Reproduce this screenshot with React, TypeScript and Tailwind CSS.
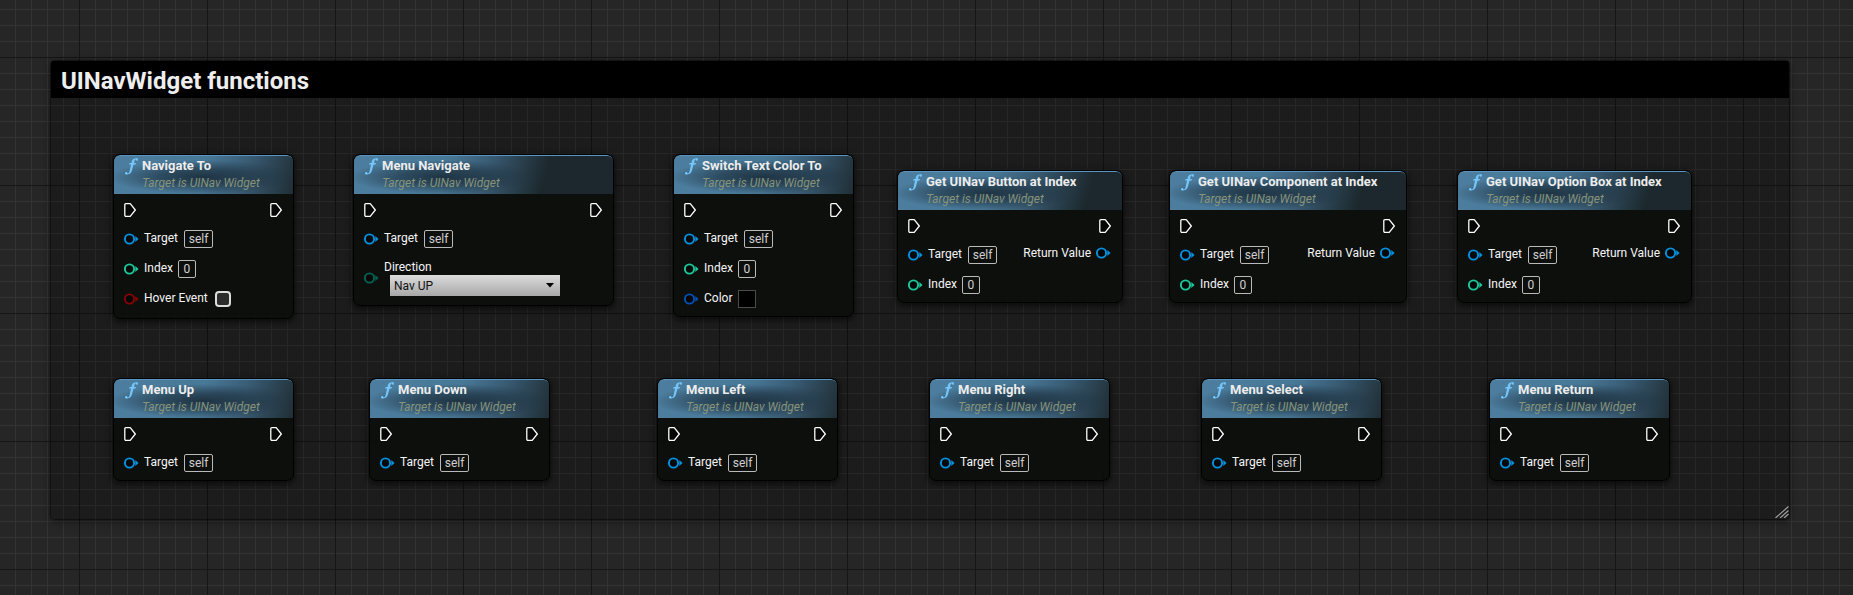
import React from "react";

type PinRow = {
  kind: "self" | "number" | "bool" | "enum" | "color";
  label: string;
  color: string;
};

type NodeSpec = {
  title: string;
  place: string;
  rows: PinRow[];
  returns?: boolean;
};

const target: PinRow = { kind: "self", label: "Target", color: "#0392e0" };
const index: PinRow = { kind: "number", label: "Index", color: "#1cc99a" };
const direction: PinRow = { kind: "enum", label: "Direction", color: "#006353" };
const hover: PinRow = { kind: "bool", label: "Hover Event", color: "#8a0303" };
const color: PinRow = { kind: "color", label: "Color", color: "#0450b4" };

const nodes: NodeSpec[] = [
  { title: "Navigate To", place: "left-[62px] top-[93px] w-[181px] h-[165px]", rows: [target, index, hover] },
  { title: "Menu Navigate", place: "left-[302px] top-[93px] w-[261px] h-[152px]", rows: [target, direction] },
  { title: "Switch Text Color To", place: "left-[622px] top-[93px] w-[181px] h-[163px]", rows: [target, index, color] },
  { title: "Get UINav Button at Index", place: "left-[846px] top-[109px] w-[226px] h-[133px]", rows: [target, index], returns: true },
  { title: "Get UINav Component at Index", place: "left-[1118px] top-[109px] w-[238px] h-[133px]", rows: [target, index], returns: true },
  { title: "Get UINav Option Box at Index", place: "left-[1406px] top-[109px] w-[235px] h-[133px]", rows: [target, index], returns: true },
  { title: "Menu Up", place: "left-[62px] top-[317px] w-[181px] h-[103px]", rows: [target] },
  { title: "Menu Down", place: "left-[318px] top-[317px] w-[181px] h-[103px]", rows: [target] },
  { title: "Menu Left", place: "left-[606px] top-[317px] w-[181px] h-[103px]", rows: [target] },
  { title: "Menu Right", place: "left-[878px] top-[317px] w-[181px] h-[103px]", rows: [target] },
  { title: "Menu Select", place: "left-[1150px] top-[317px] w-[181px] h-[103px]", rows: [target] },
  { title: "Menu Return", place: "left-[1438px] top-[317px] w-[181px] h-[103px]", rows: [target] },
];

function FunctionIcon() {
  return (
    <svg className="mt-[2px] h-[17px] w-[13px] shrink-0" viewBox="0 0 13 17" fill="#74c6fc" aria-hidden="true">
      <path d="M13 .6C10-.2 7.600.800 6.800 3.600L6.500 5H4.500L4.200 6.500H6.100L4.600 13C4.300 14.600 3.600 15.500 2.600 15.300 2.200 15.200 2.300 14.300 1.800 14H.4L0 16.200C3.600 17 6 15.900 6.900 12.600L8.500 6.500H10.600L10.900 5H8.900L9.400 3.200C9.700 2 10.200 1.500 10.800 1.600 11.200 1.700 11 2.400 11.400 2.700H12.600Z" />
    </svg>
  );
}

function ExecPin() {
  return (
    <svg className="h-[14px] w-3" viewBox="0 0 12 14" fill="none" aria-hidden="true">
      <path d="M.8 2Q.8.700 2 .700H6.200L11.300 7 6.200 13.300H2Q.8 13.300.8 12Z" fill="#050605" stroke="#fff" strokeWidth="1.300" />
    </svg>
  );
}

function DataPin({ color }: { color: string }) {
  return (
    <svg className="h-3 w-[15px] shrink-0" viewBox="0 0 15 12" aria-hidden="true">
      <circle cx="5.500" cy="6" r="4.600" fill="#050807" stroke={color} strokeWidth="1.900" />
      <path d="M11.300 3 14.600 6l-3.300 3Z" fill={color} />
    </svg>
  );
}

function InputRow({ row, id }: { row: PinRow; id: string }) {
  if (row.kind === "enum") {
    return (
      <div className="flex items-center gap-[5px]">
        <DataPin color={row.color} />
        <div className="flex flex-col">
          <label htmlFor={id} className="text-[12px] leading-[15px]">{row.label}</label>
          <div className="relative ml-[6px]">
            <select
              id={id}
              defaultValue="Nav UP"
              className="block h-[21px] w-[170px] appearance-none bg-linear-to-b from-[#dcdcdc] to-[#a8a8a8] pl-1 text-[12px] leading-5 text-[#111]"
            >
              <option>Nav UP</option>
            </select>
            <svg className="pointer-events-none absolute right-[6px] top-2 h-[5px] w-2" viewBox="0 0 8 5" aria-hidden="true">
              <path d="M0 0h8L4 4.500Z" fill="#000" />
            </svg>
          </div>
        </div>
      </div>
    );
  }
  return (
    <div className="flex h-[18px] items-center">
      <DataPin color={row.color} />
      <label htmlFor={id} className="ml-[5px] mb-[3px] text-[12px] leading-4">{row.label}</label>
      {row.kind === "self" && (
        <button id={id} className="ml-[6px] h-[18px] w-[29px] rounded-xs border border-[#b9bab9] text-[12px] leading-4 text-[#d0d0d0]">
          self
        </button>
      )}
      {row.kind === "number" && (
        <input
          id={id}
          defaultValue="0"
          className="ml-[5px] h-[18px] w-[18px] rounded-xs border border-[#b9bab9] text-center text-[12px] leading-4 text-[#d0d0d0]"
        />
      )}
      {row.kind === "bool" && (
        <input id={id} type="checkbox" className="ml-[7px] size-4 appearance-none rounded-sm border-2 border-[#dcdedc] bg-[#2b2c2b]" />
      )}
      {row.kind === "color" && <button id={id} aria-label="Color" className="ml-[6px] size-[18px] border border-[#4b4b4b] bg-black" />}
    </div>
  );
}

function GraphNode({ node }: { node: NodeSpec }) {
  return (
    <article
      className={`absolute flex flex-col overflow-hidden rounded-[7px] border border-black bg-[#0d0f0d]/95 shadow-[0_2px_6px_1px_rgba(0,0,0,0.6)] ${node.place}`}
    >
      <header className="flex h-[39px] shrink-0 gap-1 rounded-t-[6px] border-t border-[#5b97c0] bg-[#1c282d] bg-[radial-gradient(ellipse_95px_17px_at_90px_21px,#1f3443_0%,#1f3443b0_45%,transparent_100%),linear-gradient(105deg,#4d7e9f_0px,#487897_90px,#3a5d75_130px,transparent_190px)] bg-no-repeat pl-[11px]">
        <FunctionIcon />
        <div className="whitespace-nowrap pt-px">
          <h2 className="text-[13px] font-bold leading-[17px] text-[#ededed]">{node.title}</h2>
          <p className="text-[12px] italic leading-[19px] text-[#87937a]">Target is UINav Widget</p>
        </div>
      </header>
      <div className="flex justify-between pl-[10px] pr-[11px] pt-[9px]">
        <ExecPin />
        <ExecPin />
      </div>
      <div className="flex justify-between pl-[10px] pr-[11px] pt-[13px] text-[#f4f4f4]">
        <div className="flex flex-col gap-3">
          {node.rows.map((row) => (
            <InputRow key={row.label} row={row} id={`${node.title}-${row.label}`.replaceAll(" ", "-")} />
          ))}
        </div>
        {node.returns && (
          <div className="flex h-[14px] items-center gap-[5px]">
            <span className="text-[12px] leading-4">Return Value</span>
            <DataPin color="#0392e0" />
          </div>
        )}
      </div>
    </article>
  );
}

export default function App() {
  return (
    <main className="min-h-screen overflow-hidden bg-[#262626] bg-[linear-gradient(90deg,#161616_1px,transparent_1px),linear-gradient(#161616_1px,transparent_1px),linear-gradient(90deg,#343434_1px,transparent_1px),linear-gradient(#343434_1px,transparent_1px)] bg-[size:128px_128px,128px_128px,16px_16px,16px_16px] bg-[position:79px_57px,79px_57px,15px_9px,15px_9px] pt-[61px] pr-[64px] pl-[51px] font-[Roboto,sans-serif]">
      <section className="relative h-[458px] rounded-sm bg-black/25 shadow-[0_0_0_1px_rgba(0,0,0,0.4),0_2px_7px_1px_rgba(0,0,0,0.45)]">
        <h1 className="h-[37px] rounded-t-xs bg-black pl-[10px] text-[24px] font-bold leading-[40px] text-[#eee]">UINavWidget functions</h1>
        {nodes.map((node) => (
          <GraphNode key={node.title} node={node} />
        ))}
        <svg className="absolute right-0 bottom-[1px] h-3 w-[14px]" viewBox="0 0 14 12" aria-hidden="true">
          <path d="M.5 12 13.500.500M5 12l8.500-7.500M9 12l4.500-4" stroke="#a0a0a0" strokeWidth="1.200" />
        </svg>
      </section>
    </main>
  );
}
